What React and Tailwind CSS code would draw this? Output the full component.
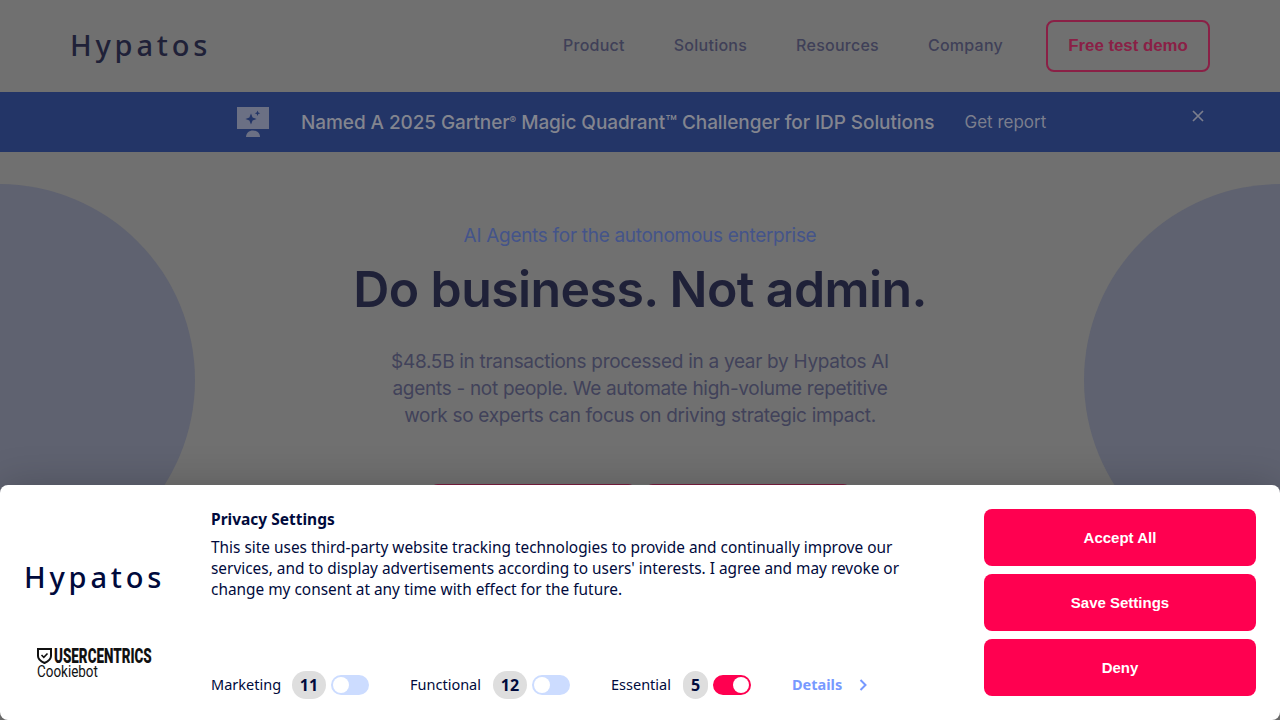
import React from "react";

const navItems = ["Product", "Solutions", "Resources", "Company"];

function Toggle({ on }) {
  return (
    <span className={`flex h-5 w-[38px] items-center rounded-full border-2 ${on ? "justify-end border-[#ff0050] bg-[#ff0050]" : "justify-start border-[#ccdcff] bg-[#ccdcff]"}`}>
      <span className="h-4 w-4 rounded-full bg-white" />
    </span>
  );
}

function Consent({ label, count, on, labelW, pillW, mr }) {
  return (
    <div className={`flex items-center ${mr}`}>
      <span className={`pb-[2px] text-[14.5px] leading-5 text-[#000a3c] ${labelW}`}>{label}</span>
      <span className={`mr-[5px] flex h-7 items-center justify-center rounded-full bg-[#dedede] text-base font-bold text-[#000a3c] ${pillW}`}>{count}</span>
      <Toggle on={on} />
    </div>
  );
}

export default function App() {
  return (
    <div className="relative h-[720px] w-[1280px] overflow-hidden bg-[#707070] font-['Inter',sans-serif]">
      <header className="flex h-[92px] items-center justify-between pl-[70px] pr-[70px]">
        <span className="mb-1 font-['Noto_Sans',sans-serif] text-[29px] font-medium leading-none tracking-[3.8px] text-[#1f2138]">Hypatos</span>
        <nav className="flex items-center">
          {navItems.map((n, i) => (
            <a key={n} className={`mb-[2px] text-base font-medium tracking-[0.25px] text-[#3f4058] ${i === 3 ? "mr-[43px]" : "mr-[49px]"}`}>{n}</a>
          ))}
          <a className="flex h-[52px] w-[164px] items-center justify-center rounded-lg border-2 border-[#8a2046] font-['Liberation_Sans',sans-serif] text-[16.800px] font-bold text-[#8a2046]">Free test demo</a>
        </nav>
      </header>

      <div className="flex h-[60px] items-center bg-[#233567] pl-[237px] pr-[76px] text-[#83858f]">
        <svg width="32" height="30" viewBox="0 0 32 30" className="mr-8 shrink-0">
          <rect x="0" y="0" width="32" height="22" fill="#6b7084" />
          <path d="M14 6.500l1.600 3.900 3.900 1.600-3.900 1.600-1.600 3.900-1.600-3.900-3.900-1.600 3.900-1.600z" fill="#233567" />
          <path d="M20.500 3.500l.8 1.900 1.900.8-1.900.8-.8 1.900-.8-1.900-1.900-.8 1.900-.8z" fill="#233567" />
          <path d="M9 30c0-3.800 3-6.500 7-6.500s7 2.700 7 6.500z" fill="#6b7084" />
        </svg>
        <span className="mt-[2px] text-[19px] font-medium tracking-[-0.08px]">Named A 2025 Gartner<sup className="text-[10px]">®</sup> Magic Quadrant™ Challenger for IDP Solutions</span>
        <a className="ml-[30px] mt-[2px] text-[17px] text-[#7b7e8d]">Get report</a>
        <svg width="12" height="12" viewBox="0 0 12 12" className="mb-3 ml-auto shrink-0" stroke="#7b7e8d" strokeWidth="1.7">
          <path d="M1 1l10 10M11 1L1 11" />
        </svg>
      </div>

      <div className="absolute left-[-197px] top-[184px] h-[392px] w-[392px] rounded-full bg-[#5f6270]" />
      <div className="absolute left-[1084px] top-[184px] h-[392px] w-[392px] rounded-full bg-[#5f6270]" />

      <main className="relative flex flex-col items-center pt-[70px]">
        <p className="text-[19px] leading-[28px] tracking-[-0.3px] text-[#44548a]">AI Agents for the autonomous enterprise</p>
        <h1 className="mt-2 text-[50px] font-semibold leading-[62px] tracking-[-0.6px] text-[#1f2138]">Do business. Not admin.</h1>
        <p className="mt-7 w-[530px] text-center text-[19px] leading-[27px] tracking-[-0.3px] text-[#41425a]">$48.5B in transactions processed in a year by Hypatos AI agents - not people. We automate high-volume repetitive work so experts can focus on driving strategic impact.</p>
        <div className="mt-[55px] flex gap-[9px]">
          <span className="h-10 w-[206px] rounded-lg border-2 border-[#7a1d40]" />
          <span className="h-10 w-[206px] rounded-lg border-2 border-[#7a1d40]" />
        </div>
      </main>

      <section className="absolute bottom-0 left-0 flex h-[235px] w-[1280px] rounded-lg bg-white shadow-[0_0_40px_rgba(0,0,0,0.2)]">
        <div className="flex w-[211px] shrink-0 flex-col pl-6">
          <span className="mt-[74px] font-['Noto_Sans',sans-serif] text-[29px] font-medium leading-9 tracking-[3.8px] text-[#000a3c]">Hypatos</span>
          <div className="ml-[13px] mt-[53px] flex flex-col">
            <div className="flex h-4 items-center gap-[2px]">
              <svg width="15" height="16" viewBox="0 0 15 16" fill="none" className="shrink-0">
                <path d="M1 1h13v7c0 3.500-3 5.500-6.500 7C4 13.500 1 11.500 1 8z" stroke="#111" strokeWidth="2" />
                <path d="M4.500 7l2.300 2.300 3.700-3.800" stroke="#111" strokeWidth="1.600" />
              </svg>
              <span className="origin-left scale-x-[0.64] whitespace-nowrap font-['Roboto',sans-serif] text-[21px] font-black leading-4 text-[#111]">USERCENTRICS</span>
            </div>
            <span className="origin-left scale-x-[0.84] font-['Roboto',sans-serif] text-[16px] leading-4 text-[#111]">Cookiebot</span>
          </div>
        </div>

        <div className="flex w-[773px] shrink-0 flex-col pt-6">
          <h2 className="font-['Noto_Sans',sans-serif] text-[15.500px] font-bold leading-5 text-[#000a3c]">Privacy Settings</h2>
          <p className="mt-2 w-[700px] font-['Noto_Sans',sans-serif] text-[15.400px] leading-[21px] text-[#000a3c]">This site uses third-party website tracking technologies to provide and continually improve our services, and to display advertisements according to users' interests. I agree and may revoke or change my consent at any time with effect for the future.</p>
          <div className="mt-[71px] flex items-center font-['Noto_Sans',sans-serif]">
            <Consent label="Marketing" count="11" labelW="w-[81px]" pillW="w-[34px]" mr="mr-[41px]" />
            <Consent label="Functional" count="12" labelW="w-[83px]" pillW="w-[34px]" mr="mr-[41px]" />
            <Consent label="Essential" count="5" on labelW="w-[72px]" pillW="w-[25px]" mr="mr-[41px]" />
            <span className="text-[14.5px] font-bold text-[#7799ff]">Details</span>
            <svg width="10" height="14" viewBox="0 0 10 14" fill="none" className="ml-4" stroke="#7799ff" strokeWidth="2">
              <path d="M2.500 2l5 5-5 5" />
            </svg>
          </div>
        </div>

        <div className="flex w-[272px] shrink-0 flex-col gap-2 pt-6">
          {["Accept All", "Save Settings", "Deny"].map((b) => (
            <button key={b} className="flex h-[57px] items-center justify-center rounded-lg bg-[#ff0050] pt-[1px] font-['Liberation_Sans',sans-serif] text-[15px] font-bold text-white">{b}</button>
          ))}
        </div>
      </section>
    </div>
  );
}
